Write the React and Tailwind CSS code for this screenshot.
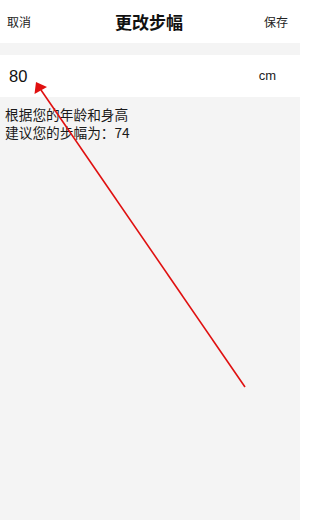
import React, { useState } from 'react';

const FONT = { fontFamily: '"Noto Sans CJK SC", "Liberation Sans", sans-serif' };

function Header() {
  return (
    <div className="h-[43px] bg-white flex items-center pl-[7px] pr-[12px]">
      <button className="text-[12px] text-[#222] w-[30px] text-left">取消</button>
      <h1 className="flex-1 text-center text-[17px] font-bold text-[#111] pl-[3px]">更改步幅</h1>
      <button className="text-[12px] text-[#222] w-[30px] text-right">保存</button>
    </div>
  );
}

function StrideInput({ value, onChange }) {
  return (
    <div className="h-[42px] bg-white flex items-center justify-between pl-[9px] pr-[24px]">
      <input
        className="w-[120px] text-[16.5px] text-[#111] outline-none bg-transparent"
        style={{ fontFamily: '"Liberation Sans", sans-serif' }}
        value={value}
        onChange={e => onChange(e.target.value)}
      />
      <span className="text-[13px] text-[#222]" style={{ fontFamily: '"Liberation Sans", sans-serif' }}>cm</span>
    </div>
  );
}

// red annotation arrow drawn over the screenshot
function Arrow() {
  return (
    <svg className="absolute inset-0 pointer-events-none" width="300" height="520" viewBox="0 0 300 520">
      <line x1="41" y1="90" x2="245" y2="387" stroke="#e01010" strokeWidth="1.6" />
      <polygon points="36,82 34.5,94 47,87" fill="#e01010" />
    </svg>
  );
}

export default function App() {
  const [stride, setStride] = useState('80');

  return (
    <div className="relative w-[300px] h-[520px] bg-[#f4f4f4] overflow-hidden" style={FONT}>
      <Header />
      <div className="h-[12px]" />
      <StrideInput value={stride} onChange={setStride} />
      <div className="px-[5px] pt-[8px] text-[13.7px] leading-[18px] text-[#1a1a1a]">
        <p>根据您的年龄和身高</p>
        <p>建议您的步幅为：74</p>
      </div>
      <Arrow />
    </div>
  );
}
